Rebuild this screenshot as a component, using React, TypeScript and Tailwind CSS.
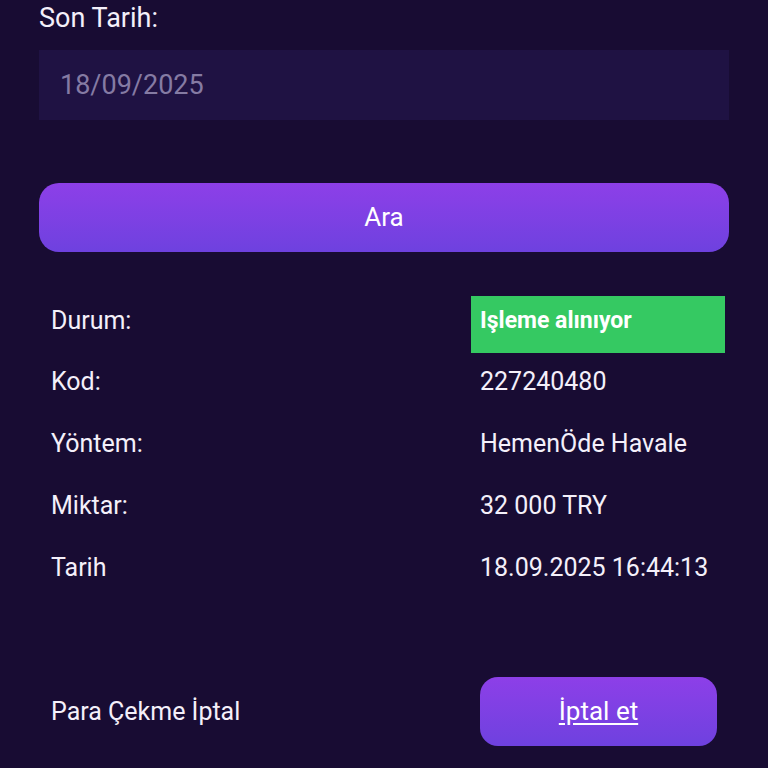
import { useState } from 'react'

const rows: { label: string; value: string }[] = [
  { label: 'Kod:', value: '227240480' },
  { label: 'Yöntem:', value: 'HemenÖde Havale' },
  { label: 'Miktar:', value: '32 000 TRY' },
  { label: 'Tarih', value: '18.09.2025 16:44:13' },
]

export default function App() {
  const [date, setDate] = useState('')

  return (
    <div
      className="min-h-screen bg-[#180c33] text-[#f4f0fa] px-[39px]"
      style={{ fontFamily: 'Roboto, "Noto Sans", sans-serif' }}
    >
      <div className="text-[27px] leading-[36px]">Son Tarih:</div>
      <input
        value={date}
        onChange={e => setDate(e.target.value)}
        placeholder="18/09/2025"
        className="mt-[14px] block w-full h-[70px] bg-[#1f1243] px-[21px] text-[27px] text-[#f4f0fa] placeholder:text-[#857ba3] outline-none"
      />

      <button className="mt-[63px] block w-full h-[69px] rounded-[20px] bg-gradient-to-b from-[#8d3fe8] to-[#6e41df] text-[26px] text-white">
        Ara
      </button>

      <div className="mt-[44px]">
        <div className="flex items-start h-[55px]">
          <div className="w-[432px] pl-[12px] pt-[10px] text-[25px] leading-[30px]">Durum:</div>
          <div className="w-[254px] h-[57px] bg-[#35c962] px-[9px] pt-[10px] text-[23px] leading-[30px] font-bold text-white">
            Işleme alınıyor
          </div>
        </div>
        {rows.map(r => (
          <div key={r.label} className="flex items-center h-[62px] text-[25px]">
            <div className="w-[432px] pl-[12px]">{r.label}</div>
            <div className="pl-[9px]">{r.value}</div>
          </div>
        ))}
      </div>

      <div className="mt-[78px] flex items-center">
        <div className="w-[432px] pl-[12px] text-[25px]">Para Çekme İptal</div>
        <button className="ml-[9px] w-[237px] h-[69px] rounded-[18px] bg-gradient-to-b from-[#8d3fe8] to-[#6e41df] text-[26px] text-white underline underline-offset-[3px]">
          İptal et
        </button>
      </div>
    </div>
  )
}
